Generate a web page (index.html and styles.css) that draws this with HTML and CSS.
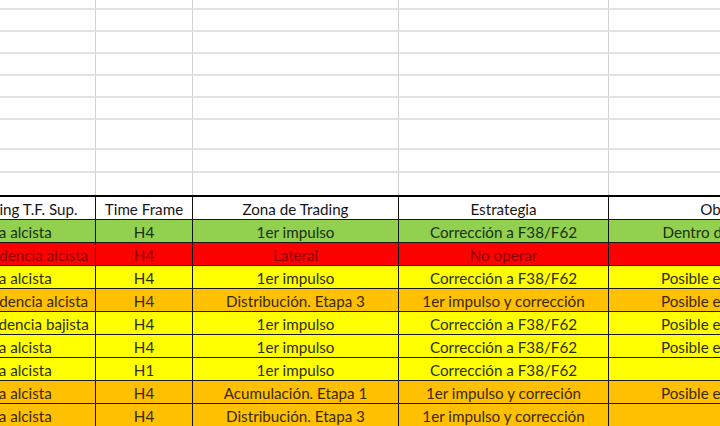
FILE: index.html
```html
<!DOCTYPE html>
<html lang="es">
<head>
<meta charset="utf-8">
<title>Hoja de trading</title>
<link rel="stylesheet" href="styles.css">
</head>
<body>
<div class="sheet">
  <div class="blank">
    <div class="brow h10"><div class="c"></div><div class="c"></div><div class="c"></div><div class="c"></div><div class="c"></div></div>
    <div class="brow"><div class="c"></div><div class="c"></div><div class="c"></div><div class="c"></div><div class="c"></div></div>
    <div class="brow"><div class="c"></div><div class="c"></div><div class="c"></div><div class="c"></div><div class="c"></div></div>
    <div class="brow"><div class="c"></div><div class="c"></div><div class="c"></div><div class="c"></div><div class="c"></div></div>
    <div class="brow"><div class="c"></div><div class="c"></div><div class="c"></div><div class="c"></div><div class="c"></div></div>
    <div class="brow"><div class="c"></div><div class="c"></div><div class="c"></div><div class="c"></div><div class="c"></div></div>
    <div class="brow h30"><div class="c"></div><div class="c"></div><div class="c"></div><div class="c"></div><div class="c"></div></div>
    <div class="brow h23"><div class="c"></div><div class="c"></div><div class="c"></div><div class="c"></div><div class="c"></div></div>
    <div class="brow last"><div class="c"></div><div class="c"></div><div class="c"></div><div class="c"></div><div class="c"></div></div>
  </div>
  <div class="table">
    <div class="trow head">
      <div class="t">Zona de Trading T.F. Sup.</div><div class="t">Time Frame</div><div class="t">Zona de Trading</div><div class="t">Estrategia</div><div class="t">Observaciones</div>
    </div>
    <div class="trow green">
      <div class="t">Tendencia alcista</div><div class="t">H4</div><div class="t">1er impulso</div><div class="t">Corrección a F38/F62</div><div class="t">Dentro de zona de trading</div>
    </div>
    <div class="trow red">
      <div class="t">Pérdida de tendencia alcista</div><div class="t">H4</div><div class="t">Lateral</div><div class="t">No operar</div><div class="t"></div>
    </div>
    <div class="trow yellow">
      <div class="t">Tendencia alcista</div><div class="t">H4</div><div class="t">1er impulso</div><div class="t">Corrección a F38/F62</div><div class="t">Posible entrada a F38/F62</div>
    </div>
    <div class="trow orange">
      <div class="t">Pérdida de tendencia alcista</div><div class="t">H4</div><div class="t">Distribución. Etapa 3</div><div class="t">1er impulso y corrección</div><div class="t">Posible entrada a F38/F62</div>
    </div>
    <div class="trow yellow">
      <div class="t">Pérdida de tendencia bajista</div><div class="t">H4</div><div class="t">1er impulso</div><div class="t">Corrección a F38/F62</div><div class="t">Posible entrada a F38/F62</div>
    </div>
    <div class="trow yellow">
      <div class="t">Tendencia alcista</div><div class="t">H4</div><div class="t">1er impulso</div><div class="t">Corrección a F38/F62</div><div class="t">Posible entrada a F38/F62</div>
    </div>
    <div class="trow yellow">
      <div class="t">Tendencia alcista</div><div class="t">H1</div><div class="t">1er impulso</div><div class="t">Corrección a F38/F62</div><div class="t"></div>
    </div>
    <div class="trow orange">
      <div class="t">Tendencia alcista</div><div class="t">H4</div><div class="t">Acumulación. Etapa 1</div><div class="t">1er impulso y correción</div><div class="t">Posible entrada a F38/F62</div>
    </div>
    <div class="trow orange">
      <div class="t">Tendencia alcista</div><div class="t">H4</div><div class="t">Distribución. Etapa 3</div><div class="t">1er impulso y corrección</div><div class="t"></div>
    </div>
  </div>
</div>
</body>
</html>
```
FILE: styles.css
```css
html, body {
  margin: 0;
  padding: 0;
  background: #ffffff;
  overflow: hidden;
}

body {
  width: 720px;
  height: 426px;
  font-family: Lato, "Liberation Sans", sans-serif;
  font-size: 15.2px;
}

.sheet {
  margin-left: -104px;
  width: 995px;
}

.brow,
.trow {
  display: grid;
  grid-template-columns: 200px 97px 206px 210px 282px;
}

.brow {
  height: 22px;
}

.brow.h10 { height: 10px; }
.brow.h30 { height: 30px; }
.brow.h23 { height: 23px; }
.brow.last { height: 22px; }

.brow .c {
  box-sizing: border-box;
  border-right: 1px solid #d2d2d2;
  border-bottom: 2px solid #e2e2e2;
}

.brow.last .c {
  border-bottom: none;
}

.trow {
  height: 23px;
  box-sizing: border-box;
  border-bottom: 1px solid #1a1a1a;
}

.trow.head {
  height: 25px;
  border-top: 2px solid #000000;
  background: #ffffff;
  color: #161616;
}

.t {
  box-sizing: border-box;
  border-right: 1px solid #111111;
  text-align: center;
  white-space: nowrap;
  overflow: hidden;
  line-height: 22px;
  padding-top: 1px;
}

.trow.green { background: #92d050; color: #18300f; }
.trow.red { background: #ff0000; color: #8a0000; }
.trow.yellow { background: #ffff00; color: #2e2e05; }
.trow.orange { background: #ffc000; color: #3a2904; }
```
